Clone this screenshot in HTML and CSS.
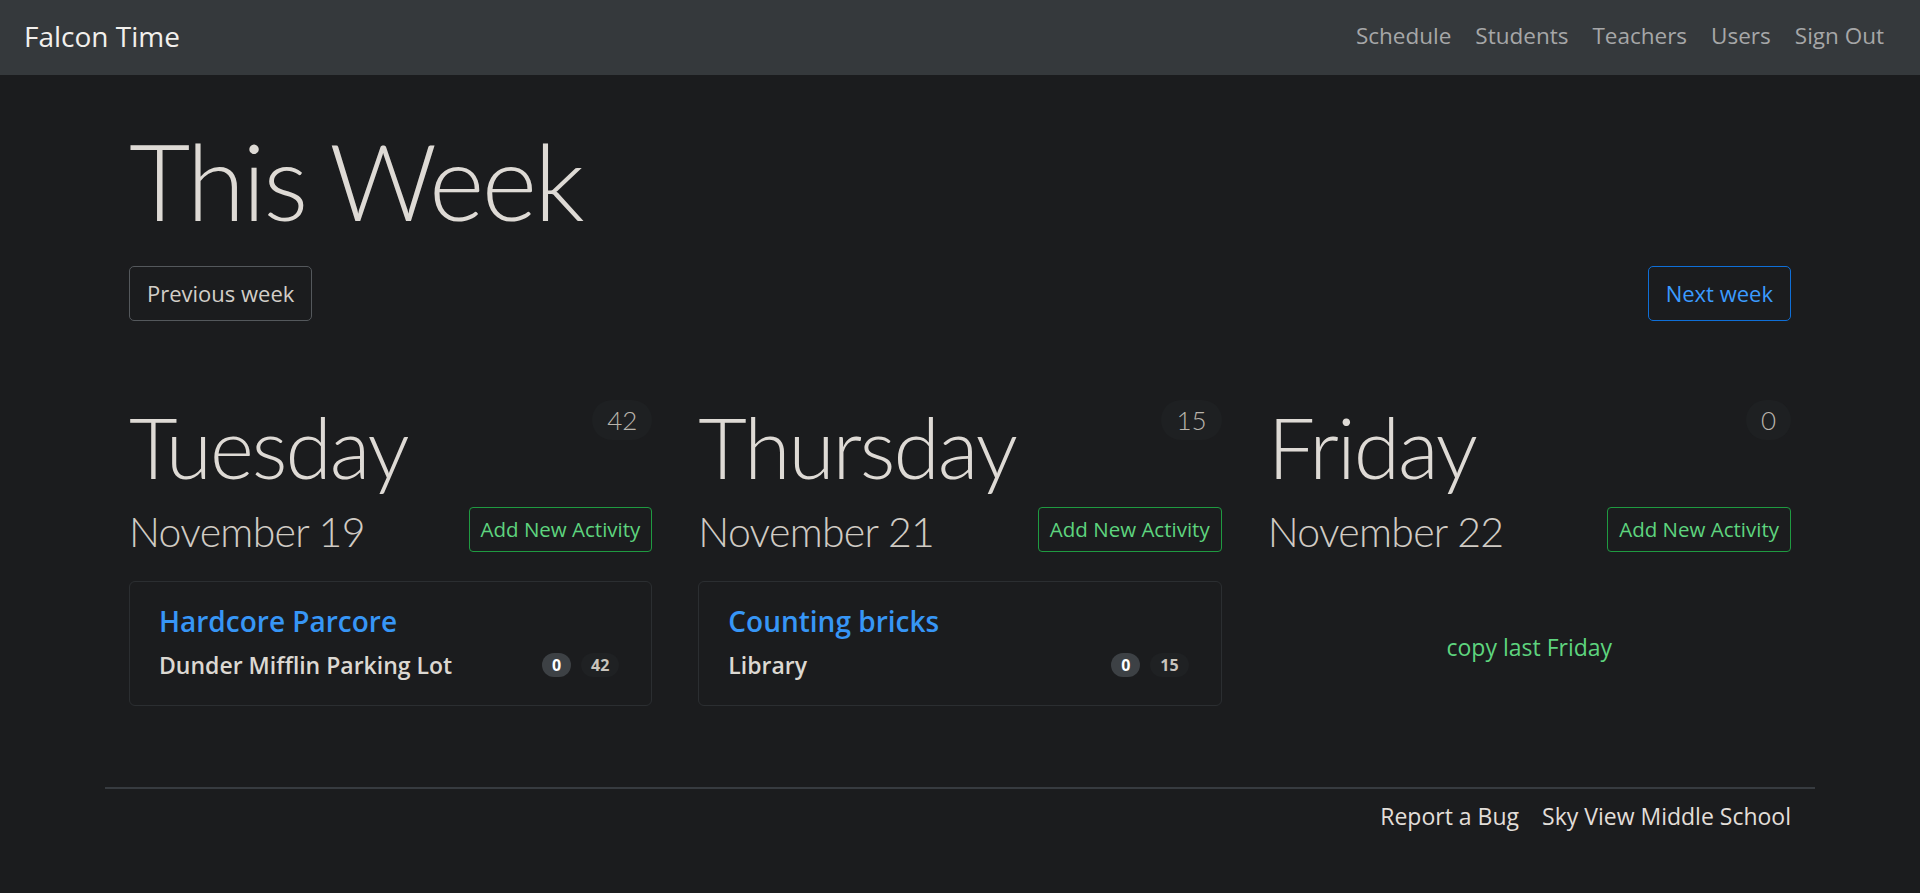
FILE: index.html
```html
<!DOCTYPE html>
<html lang="en">
<head>
<meta charset="utf-8">
<title>Falcon Time</title>
<link rel="stylesheet" href="styles.css">
</head>
<body>
<nav class="navbar">
  <a class="brand" href="#">Falcon Time</a>
  <ul class="nav-links">
    <li><a href="#">Schedule</a></li>
    <li><a href="#">Students</a></li>
    <li><a href="#">Teachers</a></li>
    <li><a href="#">Users</a></li>
    <li><a href="#">Sign Out</a></li>
  </ul>
</nav>
<div class="container">
  <main class="content">
    <h1 class="page-title">This Week</h1>
    <div class="week-nav">
      <a class="btn btn-secondary" href="#">Previous week</a>
      <a class="btn btn-primary" href="#">Next week</a>
    </div>
    <div class="days">
      <section class="day">
        <div class="day-head">
          <h2 class="day-name">Tuesday</h2>
          <span class="count">42</span>
        </div>
        <div class="day-sub">
          <h3 class="day-date">November 19</h3>
          <a class="btn-sm btn-success" href="#">Add New Activity</a>
        </div>
        <div class="card">
          <a class="card-title" href="#">Hardcore Parcore</a>
          <div class="card-row">
            <span class="location">Dunder Mifflin Parking Lot</span>
            <span class="badges"><span class="badge badge-dark">0</span><span class="badge badge-plain">42</span></span>
          </div>
        </div>
      </section>
      <section class="day">
        <div class="day-head">
          <h2 class="day-name">Thursday</h2>
          <span class="count">15</span>
        </div>
        <div class="day-sub">
          <h3 class="day-date">November 21</h3>
          <a class="btn-sm btn-success" href="#">Add New Activity</a>
        </div>
        <div class="card">
          <a class="card-title" href="#">Counting bricks</a>
          <div class="card-row">
            <span class="location">Library</span>
            <span class="badges"><span class="badge badge-dark">0</span><span class="badge badge-plain">15</span></span>
          </div>
        </div>
      </section>
      <section class="day">
        <div class="day-head">
          <h2 class="day-name">Friday</h2>
          <span class="count">0</span>
        </div>
        <div class="day-sub">
          <h3 class="day-date">November 22</h3>
          <a class="btn-sm btn-success" href="#">Add New Activity</a>
        </div>
        <div class="empty">
          <a class="copy-link" href="#">copy last Friday</a>
        </div>
      </section>
    </div>
  </main>
  <footer class="footer">
    <a href="#">Report a Bug</a>
    <a href="#">Sky View Middle School</a>
  </footer>
</div>
</body>
</html>
```
FILE: styles.css
```css
* { box-sizing: border-box; }
html, body { margin: 0; padding: 0; }
body {
  background: #1b1c1e;
  color: #dedad5;
  font-family: "Open Sans", "Noto Sans", "Liberation Sans", sans-serif;
  font-size: 24px;
  line-height: 1.5;
}
a { text-decoration: none; }

.navbar {
  height: 75px;
  background: #35393c;
  display: flex;
  align-items: center;
  justify-content: space-between;
  padding: 0 24px 4px;
}
.brand {
  color: #f2f0ed;
  font-size: 28px;
  line-height: 1.5;
}
.nav-links {
  list-style: none;
  display: flex;
  margin: 0;
  padding: 0;
}
.nav-links a {
  display: block;
  padding: 0 12px;
  color: #a6a7a8;
  font-size: 22.5px;
}

.container {
  width: 1710px;
  margin: 0 auto;
}
.content {
  padding: 41px 24px 0;
}
.page-title {
  margin: 0;
  font-family: Lato, "Open Sans", sans-serif;
  font-size: 106px;
  font-weight: 300;
  letter-spacing: -2.7px;
  line-height: 128px;
  color: #dedad5;
}
.week-nav {
  display: flex;
  justify-content: space-between;
  margin-top: 22px;
}
.btn {
  display: inline-block;
  font-size: 22px;
  line-height: 35px;
  padding: 9px 17px;
  border: 1px solid;
  border-radius: 5px;
}
.btn-secondary { color: #d2cec8; border-color: #54585c; }
.btn-primary { color: #3b9bff; border-color: #0f6fd8; }

.days {
  display: grid;
  grid-template-columns: repeat(3, 1fr);
  column-gap: 46px;
  margin-top: 76px;
}
.day-head {
  display: flex;
  justify-content: space-between;
  align-items: flex-start;
}
.day-name {
  margin: 0;
  font-family: Lato, "Open Sans", sans-serif;
  font-size: 84px;
  font-weight: 300;
  letter-spacing: -2px;
  line-height: 100px;
  color: #dedad5;
}
.count {
  margin-top: 3px;
  height: 40px;
  line-height: 40px;
  padding: 0 15px;
  border-radius: 20px;
  background: #1e2022;
  color: #b9b4ac;
  font-family: Lato, "Open Sans", sans-serif;
  font-size: 26px;
  font-weight: 300;
}
.day-sub {
  display: flex;
  justify-content: space-between;
  align-items: flex-start;
  margin-top: 10px;
}
.day-date {
  margin: 0;
  font-family: Lato, "Open Sans", sans-serif;
  font-size: 41px;
  font-weight: 300;
  letter-spacing: -0.7px;
  line-height: 50px;
  color: #d0cbc4;
}
.btn-sm {
  display: inline-block;
  font-size: 20.5px;
  line-height: 31px;
  padding: 6px 11px;
  border: 1px solid;
  border-radius: 4px;
}
.btn-success { color: #5ed47e; border-color: #1f9a41; }

.card {
  margin-top: 24px;
  border: 1px solid #2b2e31;
  border-radius: 6px;
  padding: 21px 32px 22px 29px;
}
.card-title {
  display: block;
  color: #3796f6;
  font-size: 28px;
  font-weight: 600;
  line-height: 36px;
}
.card-row {
  display: flex;
  justify-content: space-between;
  align-items: center;
  margin-top: 8px;
  height: 36px;
}
.location {
  font-size: 23px;
  font-weight: 600;
  color: #dcd8d2;
}
.badges { display: flex; gap: 10px; }
.badge {
  display: inline-block;
  font-size: 16px;
  font-weight: 700;
  line-height: 24px;
  height: 24px;
  padding: 0 10px;
  border-radius: 12px;
}
.badge-dark { background: #3d4145; color: #ffffff; }
.badge-plain { background: #1f2123; color: #c9c4bd; }

.empty {
  margin-top: 72px;
  text-align: center;
}
.copy-link {
  color: #5ed47e;
  font-size: 23px;
  line-height: 32px;
}

.footer {
  margin-top: 81px;
  border-top: 2px solid #373b40;
  display: flex;
  justify-content: flex-end;
  gap: 23px;
  padding: 11px 24px 40px;
}
.footer a {
  color: #e2ded9;
  font-size: 23px;
  line-height: 32px;
}
```
